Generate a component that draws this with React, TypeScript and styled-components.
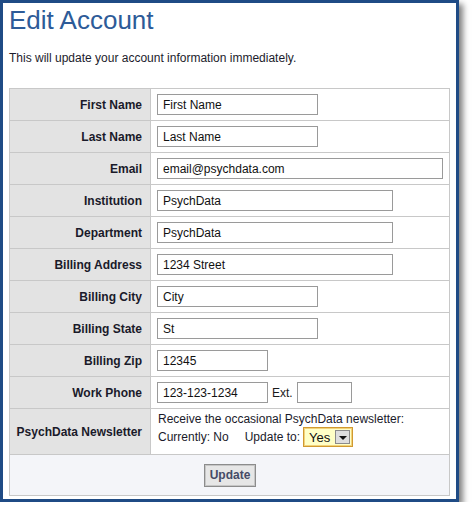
import React from "react";
import styled, { createGlobalStyle } from "styled-components";

const GlobalStyle = createGlobalStyle`
  html, body {
    margin: 0;
    padding: 0;
    background: #fff;
  }
  body {
    font-family: "Liberation Sans", Arial, sans-serif;
    font-size: 12px;
    color: #1a1a1a;
  }
`;

interface Field {
  label: string;
  value: string;
  width: number;
}

const fields: Field[] = [
  { label: "First Name", value: "First Name", width: 161 },
  { label: "Last Name", value: "Last Name", width: 161 },
  { label: "Email", value: "email@psychdata.com", width: 286 },
  { label: "Institution", value: "PsychData", width: 236 },
  { label: "Department", value: "PsychData", width: 236 },
  { label: "Billing Address", value: "1234 Street", width: 236 },
  { label: "Billing City", value: "City", width: 161 },
  { label: "Billing State", value: "St", width: 161 },
  { label: "Billing Zip", value: "12345", width: 111 },
];

function App() {
  return (
    <>
      <GlobalStyle />
      <Frame>
        <Title>Edit Account</Title>
        <Intro>This will update your account information immediately.</Intro>
        <FormGrid>
          {fields.map((f) => (
            <React.Fragment key={f.label}>
              <LabelCell>{f.label}</LabelCell>
              <ValueCell>
                <TextInput defaultValue={f.value} $width={f.width} />
              </ValueCell>
            </React.Fragment>
          ))}

          <LabelCell>Work Phone</LabelCell>
          <ValueCell>
            <TextInput defaultValue="123-123-1234" $width={111} />
            <ExtLabel>Ext.</ExtLabel>
            <TextInput defaultValue="" $width={55} />
          </ValueCell>

          <LabelCell $tall>PsychData Newsletter</LabelCell>
          <NewsletterCell>
            <NewsLine>Receive the occasional PsychData newsletter:</NewsLine>
            <NewsChoice>
              <span>Currently: No</span>
              <UpdateTo>Update to:</UpdateTo>
              <FakeSelect>
                <span>Yes</span>
                <SelectArrow />
              </FakeSelect>
            </NewsChoice>
          </NewsletterCell>

          <ActionRow>
            <UpdateButton type="button">Update</UpdateButton>
          </ActionRow>
        </FormGrid>
      </Frame>
    </>
  );
}

const Frame = styled.div`
  box-sizing: border-box;
  width: 459px;
  border: 3px solid #1f4b85;
  padding: 0 6px 3px;
  background: #fff;
  box-shadow: 4px 4px 6px rgba(0, 0, 0, 0.5);
`;

const Title = styled.h1`
  margin: 2px 0 0;
  font-size: 26px;
  line-height: 30px;
  font-weight: normal;
  color: #2d5b98;
`;

const Intro = styled.p`
  margin: 16px 0 23px;
  font-size: 12px;
  line-height: 14px;
  color: #1c1c2c;
`;

const FormGrid = styled.div`
  display: grid;
  grid-template-columns: 140px 1fr;
  gap: 1px;
  width: 441px;
  box-sizing: border-box;
  border: 1px solid #c8c8c8;
  background: #c8c8c8;
`;

const LabelCell = styled.div<{ $tall?: boolean }>`
  display: flex;
  align-items: center;
  justify-content: flex-end;
  height: ${(p) => (p.$tall ? 45 : 31)}px;
  padding-right: 8px;
  background: #e3e3e3;
  font-weight: bold;
  font-size: 12px;
  color: #1a1a2a;
  white-space: nowrap;
`;

const ValueCell = styled.div`
  display: flex;
  align-items: center;
  gap: 4px;
  height: 31px;
  padding-left: 6px;
  background: #fff;
`;

const TextInput = styled.input<{ $width: number }>`
  box-sizing: border-box;
  width: ${(p) => p.$width}px;
  height: 21px;
  margin: 0;
  padding: 0 5px;
  border: 1px solid #9a9a9a;
  border-radius: 0;
  background: #fff;
  font-family: "Liberation Sans", Arial, sans-serif;
  font-size: 12px;
  color: #111;
  outline: none;
`;

const ExtLabel = styled.span`
  color: #1a1a1a;
`;

const NewsletterCell = styled.div`
  display: flex;
  flex-direction: column;
  gap: 1px;
  height: 45px;
  box-sizing: border-box;
  padding: 3px 7px 0;
  background: #fff;
  color: #1a1a2a;
`;

const NewsLine = styled.div`
  line-height: 14px;
`;

const NewsChoice = styled.div`
  display: flex;
  align-items: center;
  height: 20px;
`;

const UpdateTo = styled.span`
  margin-left: 16px;
`;

const FakeSelect = styled.div`
  box-sizing: border-box;
  display: flex;
  align-items: center;
  justify-content: space-between;
  width: 50px;
  height: 20px;
  margin-left: 3px;
  padding: 0 2px 0 5px;
  border: 1px solid #d09a30;
  box-shadow: inset 0 0 0 1px #f2d27a;
  background: #ffffc6;
  font-size: 13px;
  color: #111;
`;

const SelectArrow = styled.div`
  position: relative;
  box-sizing: border-box;
  width: 15px;
  height: 14px;
  border: 1px solid #8a8a8a;
  background: #dedede;

  &::after {
    content: "";
    position: absolute;
    left: 3px;
    top: 5px;
    border-left: 4px solid transparent;
    border-right: 4px solid transparent;
    border-top: 4px solid #111;
  }
`;

const ActionRow = styled.div`
  grid-column: 1 / -1;
  display: flex;
  align-items: center;
  justify-content: center;
  height: 40px;
  background: #f4f5f9;
`;

const UpdateButton = styled.button`
  box-sizing: border-box;
  width: 52px;
  height: 23px;
  margin-left: 1px;
  padding: 0;
  border: 1px solid #8c8c8c;
  box-shadow: inset 0 0 0 1px #c6c6c6;
  border-radius: 0;
  background: #e6e6e6;
  font-family: "Liberation Sans", Arial, sans-serif;
  font-size: 12px;
  font-weight: bold;
  color: #454b66;
`;

export default App;
